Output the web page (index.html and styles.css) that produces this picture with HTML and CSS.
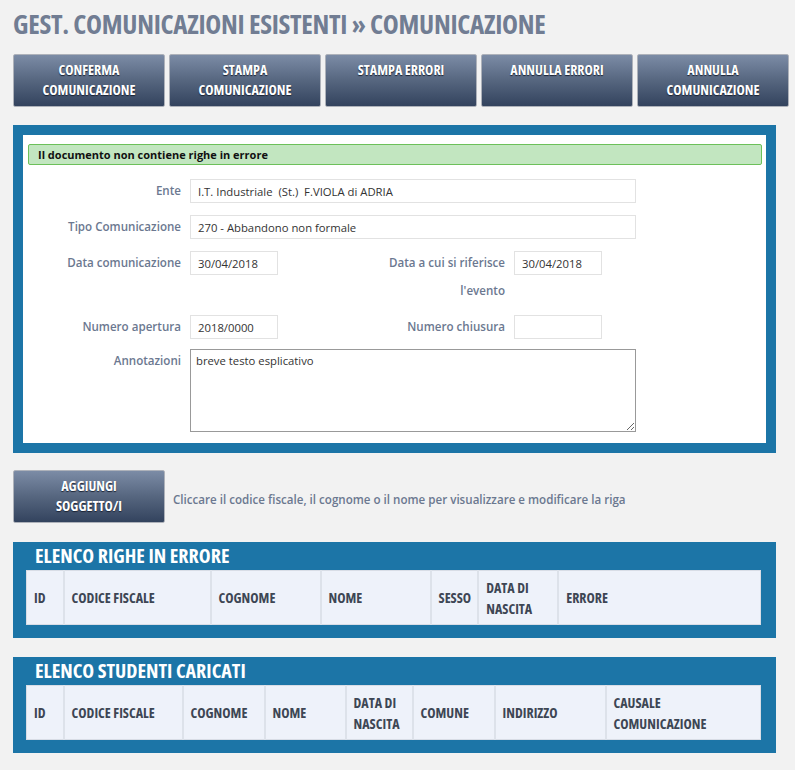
FILE: index.html
```html
<!DOCTYPE html>
<html lang="it">
<head>
    <meta charset="UTF-8">
    <meta name="viewport" content="width=device-width, initial-scale=1.0">
    <title>Gest. comunicazioni esistenti - Comunicazione</title>
    <link rel="stylesheet" href="styles.css">
</head>
<body>
    <div id="page">
        <h1 class="page-title">GEST. COMUNICAZIONI ESISTENTI &raquo; COMUNICAZIONE</h1>

        <div class="toolbar">
            <a class="btn">CONFERMA<br>COMUNICAZIONE</a>
            <a class="btn">STAMPA<br>COMUNICAZIONE</a>
            <a class="btn">STAMPA ERRORI</a>
            <a class="btn">ANNULLA ERRORI</a>
            <a class="btn">ANNULLA<br>COMUNICAZIONE</a>
        </div>

        <div class="panel">
            <div class="panel-body">
                <div class="alert-ok">Il documento non contiene righe in errore</div>

                <div class="form-row">
                    <label class="lbl">Ente</label>
                    <input class="field wide" type="text" value="I.T. Industriale  (St.)  F.VIOLA di ADRIA">
                </div>
                <div class="form-row">
                    <label class="lbl">Tipo Comunicazione</label>
                    <input class="field wide" type="text" value="270 - Abbandono non formale">
                </div>
                <div class="form-row">
                    <label class="lbl">Data comunicazione</label>
                    <input class="field short" type="text" value="30/04/2018">
                    <label class="lbl lbl-right">Data a cui si riferisce l'evento</label>
                    <input class="field short" type="text" value="30/04/2018">
                </div>
                <div class="form-row">
                    <label class="lbl">Numero apertura</label>
                    <input class="field short" type="text" value="2018/0000">
                    <label class="lbl lbl-right">Numero chiusura</label>
                    <input class="field short" type="text" value="">
                </div>
                <div class="form-row notes-row">
                    <label class="lbl">Annotazioni</label>
                    <textarea class="notes">breve testo esplicativo</textarea>
                </div>
            </div>
        </div>

        <div class="add-row">
            <a class="btn">AGGIUNGI<br>SOGGETTO/I</a>
            <span class="hint">Cliccare il codice fiscale, il cognome o il nome per visualizzare e modificare la riga</span>
        </div>

        <div class="panel list-panel">
            <h2 class="list-title">ELENCO RIGHE IN ERRORE</h2>
            <table class="list">
                <tr>
                    <th style="width:37px">ID</th>
                    <th style="width:147px">CODICE FISCALE</th>
                    <th style="width:110px">COGNOME</th>
                    <th style="width:110px">NOME</th>
                    <th style="width:45px">SESSO</th>
                    <th style="width:80px">DATA DI<br>NASCITA</th>
                    <th>ERRORE</th>
                </tr>
            </table>
        </div>

        <div class="panel list-panel">
            <h2 class="list-title">ELENCO STUDENTI CARICATI</h2>
            <table class="list">
                <tr>
                    <th style="width:37px">ID</th>
                    <th style="width:119px">CODICE FISCALE</th>
                    <th style="width:82px">COGNOME</th>
                    <th style="width:81px">NOME</th>
                    <th style="width:67px">DATA DI<br>NASCITA</th>
                    <th style="width:82px">COMUNE</th>
                    <th style="width:111px">INDIRIZZO</th>
                    <th>CAUSALE<br>COMUNICAZIONE</th>
                </tr>
            </table>
        </div>
    </div>
</body>
</html>
```

FILE: styles.css
```css
body, html {
    margin: 0;
    padding: 0;
    background-color: #f2f2f2;
    font-family: "Open Sans", "DejaVu Sans", sans-serif;
}
#page {
    width: 775px;
    padding: 8px 0 0 13px;
}
.page-title {
    margin: 0 0 14px 0;
    font-size: 27px;
    line-height: 32px;
    font-weight: 700;
    font-stretch: 75%;
    color: #717d93;
    letter-spacing: -0.3px;
}
.toolbar {
    display: flex;
    gap: 4px;
    margin-bottom: 18px;
}
.btn {
    display: block;
    flex: none;
    width: 152px;
    height: 53px;
    padding-top: 5px;
    box-sizing: border-box;
    text-align: center;
    background: linear-gradient(to bottom, #7c8ca6 0%, #56667f 50%, #33435e 100%);
    border: 1px solid #aeb2ba;
    border-radius: 2px;
    color: #fff;
    font-size: 14px;
    font-weight: 700;
    font-stretch: 75%;
    line-height: 20px;
    text-shadow: 0 1px 1px #1a2233;
    cursor: pointer;
}
.panel {
    width: 763px;
    box-sizing: border-box;
    background-color: #1c75a7;
    padding: 10px;
}
.panel-body {
    background-color: #fff;
    padding: 9px 4px 11px 5px;
}
.alert-ok {
    background-color: #c2e6c0;
    border: 1px solid #6cc05a;
    border-radius: 2px;
    padding: 0 9px;
    height: 19px;
    line-height: 19px;
    font-size: 11px;
    font-weight: 700;
    color: #111;
    margin-bottom: 14px;
}
.form-row {
    display: flex;
    align-items: flex-start;
    margin-bottom: 12px;
}
.form-row:last-child {
    margin-bottom: 0;
}
.notes-row {
    margin-top: -2px;
}
.lbl {
    width: 153px;
    flex: none;
    margin: -2px 9px -2px 0;
    text-align: right;
    font-size: 11.6px;
    font-weight: 600;
    line-height: 28px;
    color: #6b7890;
}
.lbl-right {
    width: 130px;
    margin-left: 97px;
}
.field {
    height: 24px;
    box-sizing: border-box;
    border: 1px solid #e2e2e2;
    padding: 0 7px;
    font-family: "Open Sans", sans-serif;
    font-size: 11.3px;
    color: #333;
    background: #fff;
    outline: none;
}
.wide {
    width: 446px;
}
.short {
    width: 88px;
}
.notes {
    width: 446px;
    height: 83px;
    box-sizing: border-box;
    border: 1px solid #999;
    padding: 3px 5px;
    margin: 0;
    font-family: "Open Sans", sans-serif;
    font-size: 11.3px;
    color: #333;
    resize: both;
}
.add-row {
    display: flex;
    align-items: center;
    margin: 17px 0 19px 0;
}
.hint {
    margin-left: 8px;
    margin-top: 5px;
    font-size: 11.6px;
    font-weight: 600;
    color: #6b7890;
}
.list-panel {
    padding: 0 15px 13px 13px;
    margin-bottom: 19px;
}
.list-title {
    margin: 0;
    padding-left: 9px;
    height: 28px;
    line-height: 28px;
    font-size: 20px;
    font-weight: 700;
    font-stretch: 75%;
    color: #fff;
}
.list {
    width: 100%;
    border-collapse: collapse;
    background-color: #eef2fa;
    border: 1px solid #d8dde6;
}
.list th {
    height: 54px;
    padding: 0 6px 0 7px;
    box-sizing: border-box;
    text-align: left;
    font-size: 14px;
    font-weight: 700;
    font-stretch: 75%;
    line-height: 21px;
    color: #3d4654;
    border-right: 2px solid #dde2ea;
}
.list th:last-child {
    border-right: none;
}
```
